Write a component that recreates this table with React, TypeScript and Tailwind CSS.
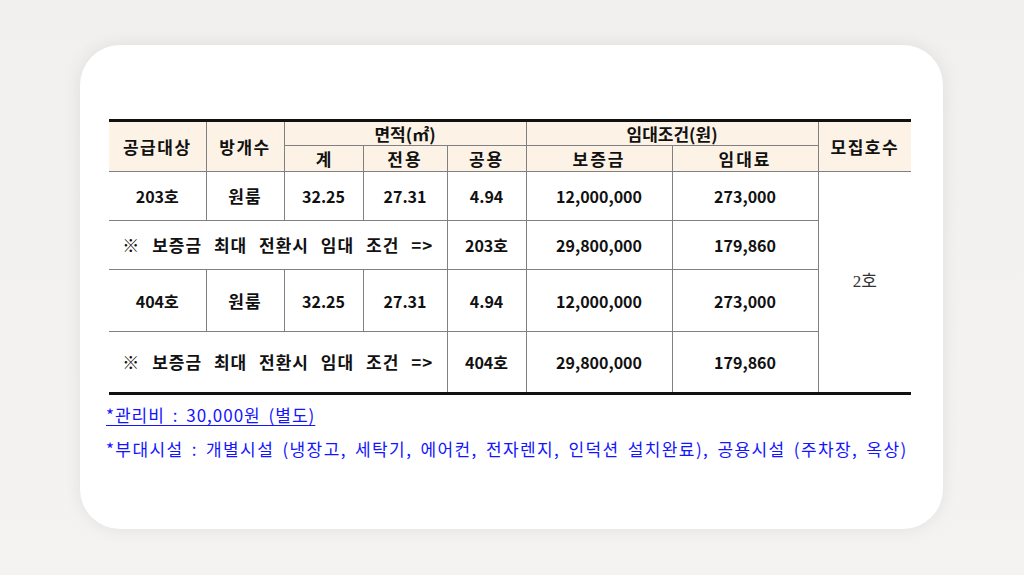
import React from "react";

const kr = "font-['Noto_Sans_CJK_KR','Noto_Sans',sans-serif]";
const cell = "border border-[#808080] text-center align-middle p-0";
const head = `${cell} bg-[#fcf3e6] font-bold text-[17px] text-[#111]`;
const body = `${cell} font-bold text-[16px] text-[#111]`;

const App = () => {
  return (
    <div className="w-[1024px] h-[575px] bg-gradient-to-b from-[#f1f0ef] to-[#f4f3f2] pt-[45px] pl-[80px]">
      <div className="w-[863px] h-[484px] bg-white rounded-[40px] shadow-[0_0_18px_rgba(0,0,0,0.08)] pt-[74px] pl-[29px]">
        <table className={`${kr} table-fixed border-collapse w-[802px] border-t-[3px] border-b-[3px] border-t-[#111] border-b-[#111]`}>
          <colgroup>
            <col className="w-[97px]" />
            <col className="w-[78px]" />
            <col className="w-[79px]" />
            <col className="w-[84px]" />
            <col className="w-[79px]" />
            <col className="w-[146px]" />
            <col className="w-[146px]" />
            <col className="w-[93px]" />
          </colgroup>
          <thead>
            <tr className="h-[25px]">
              <td rowSpan={2} className={`${head} border-l-0 border-t-0 tracking-[1.5px]`}>공급대상</td>
              <td rowSpan={2} className={`${head} border-t-0 tracking-[1.5px]`}>방개수</td>
              <td colSpan={3} className={`${head} border-t-0 leading-[22px]`}>면적(㎡)</td>
              <td colSpan={2} className={`${head} border-t-0 leading-[22px]`}>임대조건(원)</td>
              <td rowSpan={2} className={`${head} border-r-0 border-t-0 tracking-[1.5px]`}>모집호수</td>
            </tr>
            <tr className="h-[26px]">
              <td className={`${head} leading-[24px]`}>계</td>
              <td className={`${head} leading-[24px] tracking-[2px]`}>전용</td>
              <td className={`${head} leading-[24px] tracking-[2px]`}>공용</td>
              <td className={`${head} leading-[24px] tracking-[2px]`}>보증금</td>
              <td className={`${head} leading-[24px] tracking-[2px]`}>임대료</td>
            </tr>
          </thead>
          <tbody>
            <tr className="h-[49px]">
              <td className={`${body} border-l-0`}>203호</td>
              <td className={`${body} text-[17px] tracking-[1px]`}>원룸</td>
              <td className={body}>32.25</td>
              <td className={body}>27.31</td>
              <td className={body}>4.94</td>
              <td className={body}>12,000,000</td>
              <td className={body}>273,000</td>
              <td rowSpan={4} className={`${cell} border-r-0 font-['Liberation_Serif','Noto_Sans_CJK_KR',serif] font-normal text-[17px] text-[#333]`}>2호</td>
            </tr>
            <tr className="h-[49px]">
              <td colSpan={4} className={`${body} text-[17px] border-l-0 [word-spacing:7px] tracking-[1px]`}>※ 보증금 최대 전환시 임대 조건 =&gt;</td>
              <td className={body}>203호</td>
              <td className={body}>29,800,000</td>
              <td className={body}>179,860</td>
            </tr>
            <tr className="h-[62px]">
              <td className={`${body} border-l-0`}>404호</td>
              <td className={`${body} text-[17px] tracking-[1px]`}>원룸</td>
              <td className={body}>32.25</td>
              <td className={body}>27.31</td>
              <td className={body}>4.94</td>
              <td className={body}>12,000,000</td>
              <td className={body}>273,000</td>
            </tr>
            <tr className="h-[62px]">
              <td colSpan={4} className={`${body} text-[17px] border-l-0 border-b-0 [word-spacing:7px] tracking-[1px]`}>※ 보증금 최대 전환시 임대 조건 =&gt;</td>
              <td className={`${body} border-b-0`}>404호</td>
              <td className={`${body} border-b-0`}>29,800,000</td>
              <td className={`${body} border-b-0`}>179,860</td>
            </tr>
          </tbody>
        </table>
        <div className={`${kr} text-[17px] text-[#1414ff] -ml-[3px] mt-[7px]`}>
          <p className="leading-[26px] underline underline-offset-[3px] tracking-[1px] [word-spacing:3px]">*관리비 : 30,000원 (별도)</p>
          <p className="leading-[26px] mt-[8px] tracking-[1.4px] [word-spacing:3px]">*부대시설 : 개별시설 (냉장고, 세탁기, 에어컨, 전자렌지, 인덕션 설치완료), 공용시설 (주차장, 옥상)</p>
        </div>
      </div>
    </div>
  );
};

export default App;
